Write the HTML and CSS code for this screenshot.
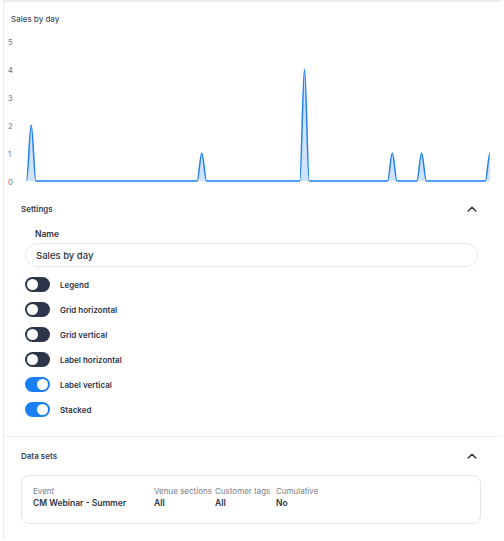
FILE: index.html
```html
<!DOCTYPE html>
<html>
<head>
<meta charset="utf-8">
<link rel="stylesheet" href="styles.css">
</head>
<body>
<div class="panel">
  <section class="chart">
    <div class="chart-title">Sales by day</div>
    <svg class="chart-svg" width="497" height="160" viewBox="4 30 497 160">
      <g class="axis">
        <text x="8" y="45">5</text>
        <text x="8" y="73">4</text>
        <text x="8" y="101">3</text>
        <text x="8" y="129">2</text>
        <text x="8" y="157">1</text>
        <text x="8" y="185">0</text>
      </g>
      <path class="area" d="M26.5,181 C28.1,181 29.6,125 31.2,125 C32.8,125 34.3,181 35.9,181 L197.1,181 C198.7,181 200.2,153 201.8,153 C203.4,153 204.9,181 206.5,181 L299.8,181 C301.4,181 302.9,69 304.5,69 C306.1,69 307.6,181 309.2,181 L387.6,181 C389.2,181 390.7,153 392.3,153 C393.9,153 395.4,181 397,181 L416.9,181 C418.5,181 420,153 421.6,153 C423.2,153 424.7,181 426.3,181 L485.3,181 C486.9,181 488.4,153 490,153 L490,181 Z"/>
      <path class="line" d="M26.5,181 C28.1,181 29.6,125 31.2,125 C32.8,125 34.3,181 35.9,181 L197.1,181 C198.7,181 200.2,153 201.8,153 C203.4,153 204.9,181 206.5,181 L299.8,181 C301.4,181 302.9,69 304.5,69 C306.1,69 307.6,181 309.2,181 L387.6,181 C389.2,181 390.7,153 392.3,153 C393.9,153 395.4,181 397,181 L416.9,181 C418.5,181 420,153 421.6,153 C423.2,153 424.7,181 426.3,181 L485.3,181 C486.9,181 488.4,153 490,153"/>
    </svg>
  </section>

  <section class="settings">
    <div class="sec-head">
      <span class="sec-title">Settings</span>
      <svg class="chev" width="10" height="6" viewBox="0 0 10 6"><path d="M1.2,5 L5,1.3 L8.8,5"/></svg>
    </div>
    <div class="settings-body">
      <div class="field-label">Name</div>
      <div class="input">Sales by day</div>
      <ul class="toggles">
        <li class="toggle-row"><span class="toggle"></span><span class="toggle-label">Legend</span></li>
        <li class="toggle-row"><span class="toggle"></span><span class="toggle-label">Grid horizontal</span></li>
        <li class="toggle-row"><span class="toggle"></span><span class="toggle-label">Grid vertical</span></li>
        <li class="toggle-row"><span class="toggle"></span><span class="toggle-label">Label horizontal</span></li>
        <li class="toggle-row"><span class="toggle on"></span><span class="toggle-label">Label vertical</span></li>
        <li class="toggle-row"><span class="toggle on"></span><span class="toggle-label">Stacked</span></li>
      </ul>
    </div>
  </section>

  <section class="datasets">
    <div class="sec-head">
      <span class="sec-title">Data sets</span>
      <svg class="chev" width="10" height="6" viewBox="0 0 10 6"><path d="M1.2,5 L5,1.3 L8.8,5"/></svg>
    </div>
    <div class="ds-card">
      <div class="ds-col c1"><div class="ds-k">Event</div><div class="ds-v">CM Webinar - Summer</div></div>
      <div class="ds-col c2"><div class="ds-k">Venue sections</div><div class="ds-v">All</div></div>
      <div class="ds-col c3"><div class="ds-k">Customer tags</div><div class="ds-v">All</div></div>
      <div class="ds-col c4"><div class="ds-k">Cumulative</div><div class="ds-v">No</div></div>
    </div>
  </section>
</div>
</body>
</html>
```

FILE: styles.css
```css
* { box-sizing: border-box; }
html, body { margin: 0; padding: 0; background: #fff; }
body {
  font-family: Inter, "Noto Sans", "DejaVu Sans", sans-serif;
  color: #2c3446;
}
.panel {
  margin-left: 3px;
  width: 498px;
  border-top: 2px solid #ececec;
  border-left: 1px solid #ececec;
  min-height: 539px;
}
.chart {
  padding: 11px 0 5px 7px;
  height: 193px;
}
.chart-title {
  font-size: 8px;
  line-height: 12px;
  font-weight: 500;
  color: #4b5263;
}
.chart-svg {
  display: block;
  margin: 5px 0 0 -7px;
}
.axis text {
  font-family: Inter, "Noto Sans", sans-serif;
  font-size: 7.5px;
  fill: #6b6f78;
}
.area { fill: #cfe3fd; stroke: none; }
.line { fill: none; stroke: #1f7ff3; stroke-width: 1.5; stroke-linejoin: round; }

.settings {
  border-bottom: 1px solid #efefef;
  padding: 7px 0 14px 0;
}
.sec-head {
  display: flex;
  align-items: center;
  justify-content: space-between;
  height: 14px;
  padding: 0 24px 0 17px;
}
.sec-title {
  font-size: 8px;
  font-weight: 600;
  color: #394052;
}
.chev path { fill: none; stroke: #2d3548; stroke-width: 1.5; stroke-linecap: round; stroke-linejoin: round; }

.settings-body {
  padding: 12px 23px 0 21px;
}
.field-label {
  font-size: 8.5px;
  font-weight: 600;
  line-height: 12px;
  padding-left: 10px;
  color: #2c3446;
}
.input {
  margin-top: 3px;
  height: 24px;
  border: 1px solid #e9e9e9;
  border-radius: 12px;
  padding-left: 10px;
  display: flex;
  align-items: center;
  font-size: 9.5px;
  font-weight: 500;
  color: #2c3446;
}
.toggles {
  list-style: none;
  margin: 5px 0 0 0;
  padding: 0;
}
.toggle-row {
  height: 25px;
  display: flex;
  align-items: center;
  gap: 10px;
}
.toggle {
  position: relative;
  width: 25px;
  height: 15px;
  border-radius: 8px;
  background: #2c3549;
}
.toggle::after {
  content: "";
  position: absolute;
  top: 2px;
  left: 2px;
  width: 11px;
  height: 11px;
  border-radius: 50%;
  background: #fff;
}
.toggle.on { background: #1a7ff7; }
.toggle.on::after { left: 12px; }
.toggle-label {
  font-size: 8px;
  font-weight: 600;
  color: #2c3446;
}

.datasets {
  padding: 12px 0 0 0;
}
.ds-card {
  margin: 12px 20px 0 17px;
  height: 49px;
  border: 1px solid #e6e6e6;
  border-radius: 8px;
  padding: 9px 0 0 11px;
  display: flex;
}
.c1 { width: 121px; }
.c2 { width: 61px; }
.c3 { width: 61px; }
.ds-k {
  font-size: 8px;
  line-height: 12px;
  color: #7a7e87;
  white-space: nowrap;
}
.ds-v {
  font-size: 8.5px;
  line-height: 12px;
  font-weight: 600;
  color: #2c3446;
  white-space: nowrap;
}
```
